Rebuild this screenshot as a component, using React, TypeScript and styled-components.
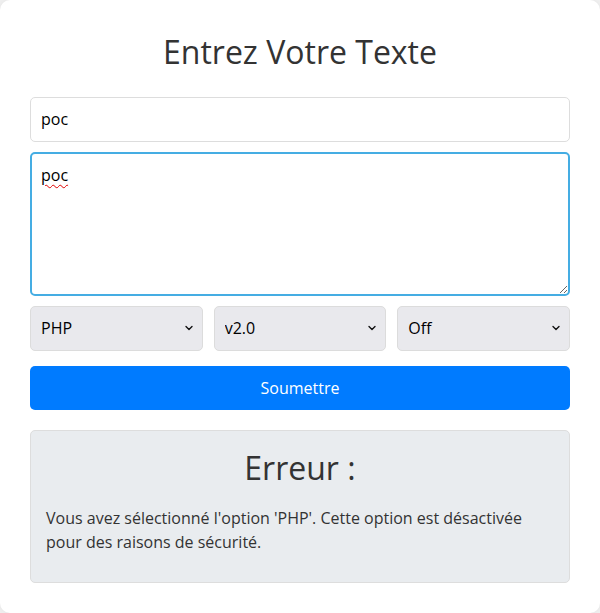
import styled, { createGlobalStyle } from 'styled-components';
import { ChevronDown } from 'lucide-react';

const GlobalStyle = createGlobalStyle`
  html, body {
    margin: 0;
    padding: 0;
    background: #f2f2f2;
  }
  * {
    box-sizing: border-box;
  }
`;

const selects = [
  { value: 'PHP', options: ['PHP', 'Python', 'JavaScript'] },
  { value: 'v2.0', options: ['v2.0', 'v1.0'] },
  { value: 'Off', options: ['Off', 'On'] },
];

export default function App() {
  return (
    <>
      <GlobalStyle />
      <Card>
        <Title>Entrez Votre Texte</Title>
        <Form onSubmit={(e) => e.preventDefault()}>
          <TextInput type="text" defaultValue="poc" />
          <TextArea defaultValue="poc" spellCheck />
          <SelectRow>
            {selects.map((s) => (
              <SelectWrap key={s.value}>
                <Select defaultValue={s.value}>
                  {s.options.map((o) => (
                    <option key={o}>{o}</option>
                  ))}
                </Select>
                <Chevron size={12} strokeWidth={2.75} />
              </SelectWrap>
            ))}
          </SelectRow>
          <SubmitButton type="submit">Soumettre</SubmitButton>
        </Form>
        <ErrorBox>
          <ErrorTitle>Erreur :</ErrorTitle>
          <ErrorText>
            Vous avez sélectionné l'option 'PHP'. Cette option est désactivée
            pour des raisons de sécurité.
          </ErrorText>
        </ErrorBox>
      </Card>
    </>
  );
}

const Card = styled.div`
  width: 600px;
  padding: 30px;
  background: #fff;
  border-radius: 10px;
  box-shadow: 0 0 10px rgba(0, 0, 0, 0.08);
  font-family: 'Open Sans', 'Noto Sans', sans-serif;
  color: #333;
`;

const Title = styled.h1`
  margin: 0 0 22px;
  text-align: center;
  font-size: 32px;
  font-weight: 400;
  line-height: 1.4;
`;

const Form = styled.form`
  display: flex;
  flex-direction: column;
  gap: 10px;
`;

const fieldBase = `
  width: 100%;
  font-family: 'Open Sans', 'Noto Sans', sans-serif;
  font-size: 16px;
  color: #000;
  border-radius: 5px;
  outline: none;
`;

const TextInput = styled.input`
  ${fieldBase}
  height: 45px;
  padding: 10px;
  border: 1px solid #ddd;
`;

const TextArea = styled.textarea`
  ${fieldBase}
  height: 144px;
  padding: 10px 9px 8px;
  border: 2px solid #45ade3;
  resize: vertical;
  line-height: 1.4;
  text-decoration: underline wavy #e00000;
  text-decoration-thickness: 1px;
  text-underline-offset: 3px;
`;

const SelectRow = styled.div`
  display: grid;
  grid-template-columns: 1fr 1fr 1fr;
  gap: 11px;
`;

const SelectWrap = styled.div`
  position: relative;
`;

const Select = styled.select`
  ${fieldBase}
  appearance: none;
  height: 45px;
  padding: 0 28px 0 10px;
  background: #e9e9ed;
  border: 1px solid #dcdcdc;
`;

const Chevron = styled(ChevronDown)`
  position: absolute;
  right: 8px;
  top: 50%;
  transform: translateY(-50%);
  color: #111;
  pointer-events: none;
`;

const SubmitButton = styled.button`
  height: 44px;
  margin-top: 5px;
  border: none;
  border-radius: 5px;
  background: #007bff;
  color: #fff;
  font-family: 'Open Sans', 'Noto Sans', sans-serif;
  font-size: 16px;
  cursor: pointer;
`;

const ErrorBox = styled.div`
  margin-top: 20px;
  padding: 15px;
  min-height: 153px;
  background: #e9ecef;
  border: 1px solid #ddd;
  border-radius: 5px;
`;

const ErrorTitle = styled.h2`
  margin: 0 0 15px;
  text-align: center;
  font-size: 32px;
  font-weight: 400;
  line-height: 1.4;
`;

const ErrorText = styled.p`
  margin: 0;
  font-size: 16px;
  line-height: 24px;
`;
